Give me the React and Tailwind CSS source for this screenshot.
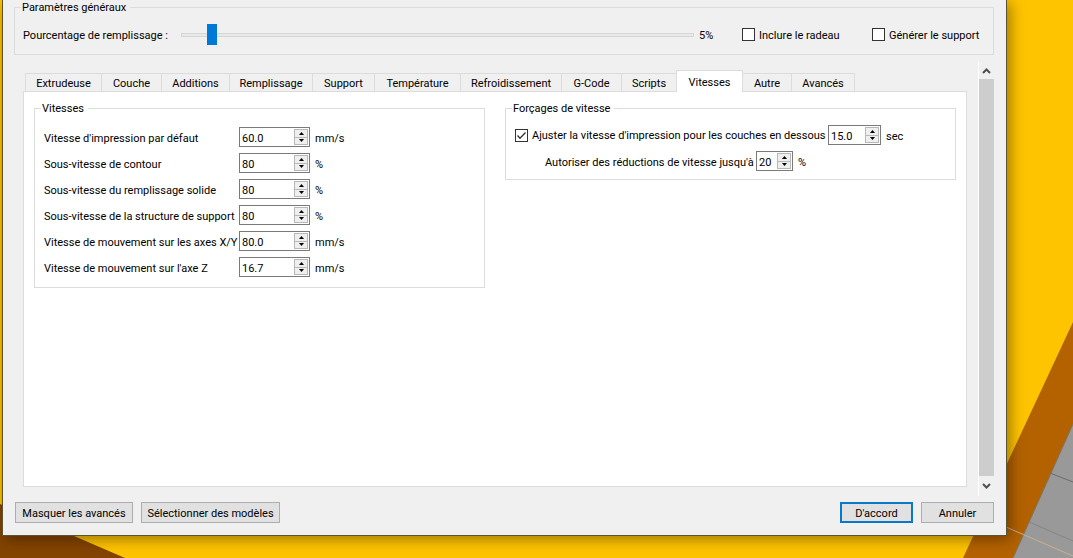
import { useState } from 'react'
import { clsx } from 'clsx'

const TABS = [
  { label: 'Extrudeuse', width: 'w-[77px]' },
  { label: 'Couche', width: 'w-[60px]' },
  { label: 'Additions', width: 'w-[68px]' },
  { label: 'Remplissage', width: 'w-[83px]' },
  { label: 'Support', width: 'w-[62px]' },
  { label: 'Température', width: 'w-[86px]' },
  { label: 'Refroidissement', width: 'w-[101px]' },
  { label: 'G-Code', width: 'w-[60px]' },
  { label: 'Scripts', width: 'w-[55px]' },
  { label: 'Vitesses', width: 'w-[67px]' },
  { label: 'Autre', width: 'w-[49px]' },
  { label: 'Avancés', width: 'w-[63px]' },
]

const SPEEDS = [
  { id: 'default', label: "Vitesse d'impression par défaut", value: '60.0', unit: 'mm/s' },
  { id: 'outline', label: 'Sous-vitesse de contour', value: '80', unit: '%' },
  { id: 'infill', label: 'Sous-vitesse du remplissage solide', value: '80', unit: '%' },
  { id: 'support', label: 'Sous-vitesse de la structure de support', value: '80', unit: '%' },
  { id: 'xy', label: 'Vitesse de mouvement sur les axes X/Y', value: '80.0', unit: 'mm/s' },
  { id: 'z', label: "Vitesse de mouvement sur l'axe Z", value: '16.7', unit: 'mm/s' },
]

const Scene = () => (
  <svg
    className="absolute inset-0 h-full w-full"
    viewBox="0 0 1073 558"
    preserveAspectRatio="none"
    aria-hidden="true"
  >
    <rect width="1073" height="558" fill="#ffc400" />
    <polygon points="0,504 125,558 0,558" fill="#844400" />
    <polygon points="1073,322 1073,558 963,558" fill="#b46200" />
    <polygon points="1073,424 1073,558 1013,558" fill="#999999" />
    <path d="M1073 424L1013 558" stroke="#7d7466" />
    <path d="M1050 473L1073 482" stroke="#6c6c6c" />
    <path d="M1029 522L1073 541" stroke="#858585" />
    <path d="M1006 527L1073 556" stroke="#c9b08f" />
  </svg>
)

const Group = ({ title, className, children }) => (
  <fieldset className={clsx('min-w-0 border border-[#dcdcdc] px-[6px]', className)}>
    <legend className="pl-px pr-1 leading-[15px]">{title}</legend>
    {children}
  </fieldset>
)

const SpinBox = ({ id, label, value, step = 1, decimals = 0, className }) => {
  const [current, setCurrent] = useState(value)
  const bump = (delta) => setCurrent((Number(current) + delta).toFixed(decimals))

  return (
    <span className={clsx('flex h-5 shrink-0 border border-[#7a7a7a] bg-white p-px', className)}>
      <input
        id={id}
        type="text"
        aria-label={label}
        value={current}
        onChange={(e) => setCurrent(e.target.value)}
        className="w-0 min-w-0 flex-1 bg-transparent pl-px pt-[2px] outline-none"
      />
      <span className="flex w-[14px] flex-col">
        <button
          type="button"
          aria-label="Augmenter"
          onClick={() => bump(step)}
          className="flex flex-1 items-center justify-center border border-[#b8b8b8] bg-[#efefef]"
        >
          <svg viewBox="0 0 5 3" className="h-[3px] w-[5px]" aria-hidden="true">
            <path d="M0 3L2.5 0L5 3Z" />
          </svg>
        </button>
        <button
          type="button"
          aria-label="Diminuer"
          onClick={() => bump(-step)}
          className="flex flex-1 items-center justify-center border border-t-0 border-[#b8b8b8] bg-[#efefef]"
        >
          <svg viewBox="0 0 5 3" className="h-[3px] w-[5px]" aria-hidden="true">
            <path d="M0 0L2.5 3L5 0Z" />
          </svg>
        </button>
      </span>
    </span>
  )
}

const CheckBox = ({ label, defaultChecked, className }) => (
  <label className={clsx('flex items-center gap-1', className)}>
    <span className="relative flex">
      <input
        type="checkbox"
        defaultChecked={defaultChecked}
        className="peer h-[13px] w-[13px] appearance-none border border-[#333] bg-white"
      />
      <svg
        viewBox="0 0 13 13"
        className="pointer-events-none absolute inset-0 hidden h-[13px] w-[13px] peer-checked:block"
        fill="none"
        stroke="#333"
        strokeWidth="1.3"
        aria-hidden="true"
      >
        <path d="M2.5 6.5L5 9.2L10.5 3.5" />
      </svg>
    </span>
    <span className="whitespace-nowrap pt-px">{label}</span>
  </label>
)

const PushButton = ({ isDefault, className, children }) => (
  <button
    type="button"
    className={clsx(
      'h-[21px] whitespace-nowrap bg-[#e1e1e1] pt-px text-center',
      isDefault ? 'border-2 border-[#0a78c8]' : 'border border-[#adadad]',
      className
    )}
  >
    {children}
  </button>
)

const ScrollBar = () => (
  <div className="flex w-4 shrink-0 flex-col border-l border-white bg-[#f0f0f0]">
    <button type="button" aria-label="Défiler vers le haut" className="flex h-[17px] items-center justify-center">
      <svg viewBox="0 0 9 6" className="h-[6px] w-[9px]" fill="none" stroke="#505050" strokeWidth="2" aria-hidden="true">
        <path d="M1 5L4.5 1.5L8 5" />
      </svg>
    </button>
    <div className="flex-1 bg-[#cdcdcd]" />
    <button type="button" aria-label="Défiler vers le bas" className="flex h-5 items-center justify-center">
      <svg viewBox="0 0 9 6" className="h-[6px] w-[9px]" fill="none" stroke="#505050" strokeWidth="2" aria-hidden="true">
        <path d="M1 1L4.5 4.5L8 1" />
      </svg>
    </button>
  </div>
)

const GeneralSettings = () => {
  const [infill, setInfill] = useState(5)

  return (
    <Group title="Paramètres généraux" className="pb-[9px]">
      <div className="flex items-center pl-[2px] pr-[7px] pt-[9px]">
        <label htmlFor="infill-percent" className="w-[158px] whitespace-nowrap pt-[2px]">
          Pourcentage de remplissage :
        </label>
        <input
          id="infill-percent"
          type="range"
          min="0"
          max="100"
          value={infill}
          onChange={(e) => setInfill(Number(e.target.value))}
          className="h-[21px] min-w-0 flex-1 appearance-none bg-transparent [&::-webkit-slider-runnable-track]:h-1 [&::-webkit-slider-runnable-track]:border [&::-webkit-slider-runnable-track]:border-[#d6d6d6] [&::-webkit-slider-runnable-track]:bg-[#e7eaea] [&::-webkit-slider-thumb]:-mt-[10px] [&::-webkit-slider-thumb]:h-[21px] [&::-webkit-slider-thumb]:w-[10px] [&::-webkit-slider-thumb]:appearance-none [&::-webkit-slider-thumb]:bg-[#0078d7]"
        />
        <output htmlFor="infill-percent" className="w-12 pl-[5px] pt-[2px]">{infill}%</output>
        <CheckBox label="Inclure le radeau" className="w-[130px]" />
        <CheckBox label="Générer le support" className="w-[108px]" />
      </div>
    </Group>
  )
}

const SpeedsPanel = () => (
  <div className="grid grid-cols-2 items-start gap-5">
    <Group title="Vitesses" className="pb-[10px]">
      <div className="flex flex-col gap-1.5 pl-[3px] pt-[11px]">
        {SPEEDS.map(({ id, label, value, unit }) => (
          <div key={id} className="flex items-center whitespace-nowrap">
            <label htmlFor={id} className="w-[195px] pt-[2px]">{label}</label>
            <SpinBox id={id} value={value} decimals={value.includes('.') ? 1 : 0} className="w-[71px]" />
            <span className="pl-[5px] pt-[2px]">{unit}</span>
          </div>
        ))}
      </div>
    </Group>

    <Group title="Forçages de vitesse" className="pb-2">
      <div className="flex flex-col gap-1.5 pl-[3px] pt-[9px]">
        <div className="flex items-center">
          <CheckBox
            label="Ajuster la vitesse d'impression pour les couches en dessous"
            className="w-[313px]"
            defaultChecked
          />
          <SpinBox label="Durée minimale de couche" value="15.0" decimals={1} className="w-[53px]" />
          <span className="pl-[5px] pt-[2px]">sec</span>
        </div>
        <div className="flex items-center whitespace-nowrap pl-[30px]">
          <label htmlFor="reduction" className="w-[211px] pt-[2px]">
            Autoriser des réductions de vitesse jusqu'à
          </label>
          <SpinBox id="reduction" value="20" className="w-[37px]" />
          <span className="pl-[5px] pt-[2px]">%</span>
        </div>
      </div>
    </Group>
  </div>
)

export default function App() {
  const [activeTab, setActiveTab] = useState('Vitesses')

  return (
    <div className="relative flex min-h-screen overflow-hidden pb-[22px] pl-[2px] pr-[66px] font-[Roboto,Tahoma,sans-serif] text-[11px] leading-[15px] text-black">
      <Scene />

      <main className="relative flex min-w-0 flex-1 flex-col border border-t-0 border-[#5c5334] bg-[#f0f0f0] pb-3 pl-[11px] pr-3 shadow-[3px_3px_14px_rgba(0,0,0,0.4)]">
        <GeneralSettings />

        <div className="mt-[7px] flex flex-1">
          <div className="flex min-w-0 flex-1 flex-col pb-[9px] pl-[9px] pr-[11px] pt-2">
            <div role="tablist" className="flex items-end pl-[2px]">
              {TABS.map(({ label, width }) => {
                const active = label === activeTab
                return (
                  <button
                    key={label}
                    type="button"
                    role="tab"
                    aria-selected={active}
                    onClick={() => setActiveTab(label)}
                    className={clsx(
                      'whitespace-nowrap border-r border-t border-[#dcdcdc] pt-px text-center first:border-l',
                      width,
                      active ? 'relative -mb-px -ml-px h-[22px] border-l bg-white' : 'h-[18px] bg-[#f0f0f0]'
                    )}
                  >
                    {label}
                  </button>
                )
              })}
            </div>
            <div role="tabpanel" className="flex-1 border border-[#dcdcdc] bg-white px-[10px] pt-[9px]">
              {activeTab === 'Vitesses' && <SpeedsPanel />}
            </div>
          </div>
          <ScrollBar />
        </div>

        <div className="mt-[6px] flex gap-2 pl-px">
          <PushButton className="w-[118px]">Masquer les avancés</PushButton>
          <PushButton className="w-[139px]">Sélectionner des modèles</PushButton>
          <PushButton className="ml-auto w-[73px]" isDefault>D'accord</PushButton>
          <PushButton className="w-[73px]">Annuler</PushButton>
        </div>
      </main>
    </div>
  )
}
